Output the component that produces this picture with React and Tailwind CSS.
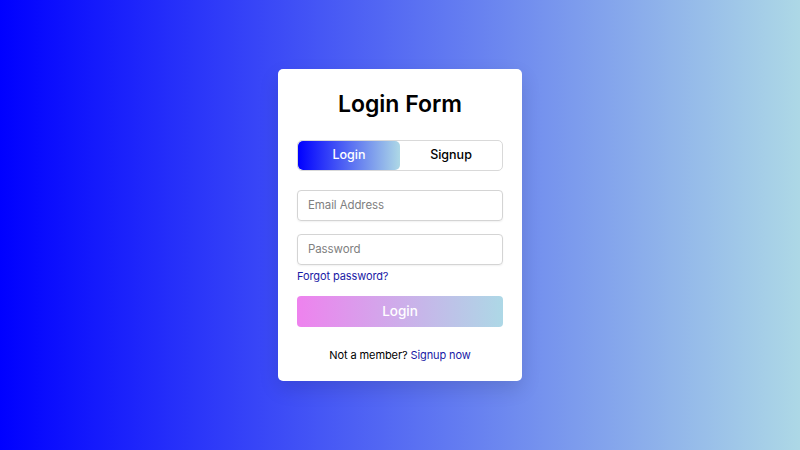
import React from "react";

export default function App() {
  return (
    <div
      className="w-[800px] h-[450px] flex items-center justify-center bg-[linear-gradient(to_right,#0000ff,#add8e6)]"
      style={{ fontFamily: "Inter, 'Open Sans', sans-serif" }}
    >
      <div className="w-[244px] bg-white rounded-[5px] shadow-[0_8px_20px_rgba(0,0,0,0.12)] px-[19px] pt-[20px] pb-[18px] flex flex-col">
        <h1 className="text-center text-[23px] leading-[30px] font-semibold text-black">Login Form</h1>
        <div className="mt-[21px] h-[31px] flex border border-[#d9d9d9] rounded-[5px] overflow-hidden">
          <div className="flex-1 flex items-center justify-center text-white text-[12.5px] font-medium bg-[linear-gradient(to_right,#0000ff,#add8e6)] rounded-[5px]">Login</div>
          <div className="flex-1 flex items-center justify-center text-black text-[12.5px] font-medium">Signup</div>
        </div>
        <div className="mt-[19px] h-[31px] border border-[#d4d4d4] rounded-[4px] flex items-center px-[10px] text-[11.5px] tracking-[-0.1px] text-[#808080] shadow-[0_1px_2px_rgba(0,0,0,0.06)]">Email Address</div>
        <div className="mt-[13px] h-[31px] border border-[#d4d4d4] rounded-[4px] flex items-center px-[10px] text-[11.5px] tracking-[-0.1px] text-[#808080] shadow-[0_1px_2px_rgba(0,0,0,0.06)]">Password</div>
        <div className="mt-[3px] text-[11px] tracking-[-0.1px] leading-[16px] text-[#1a1aa6]">Forgot password?</div>
        <div className="mt-[12px] h-[31px] rounded-[4px] flex items-center justify-center text-white text-[13.5px] font-medium bg-[linear-gradient(to_right,#ee82ee,#add8e6)]">Login</div>
        <div className="mt-[20px] text-center text-[11px] tracking-[-0.1px] leading-[16px] text-black">
          Not a member? <span className="text-[#1a1aa6]">Signup now</span>
        </div>
      </div>
    </div>
  );
}
